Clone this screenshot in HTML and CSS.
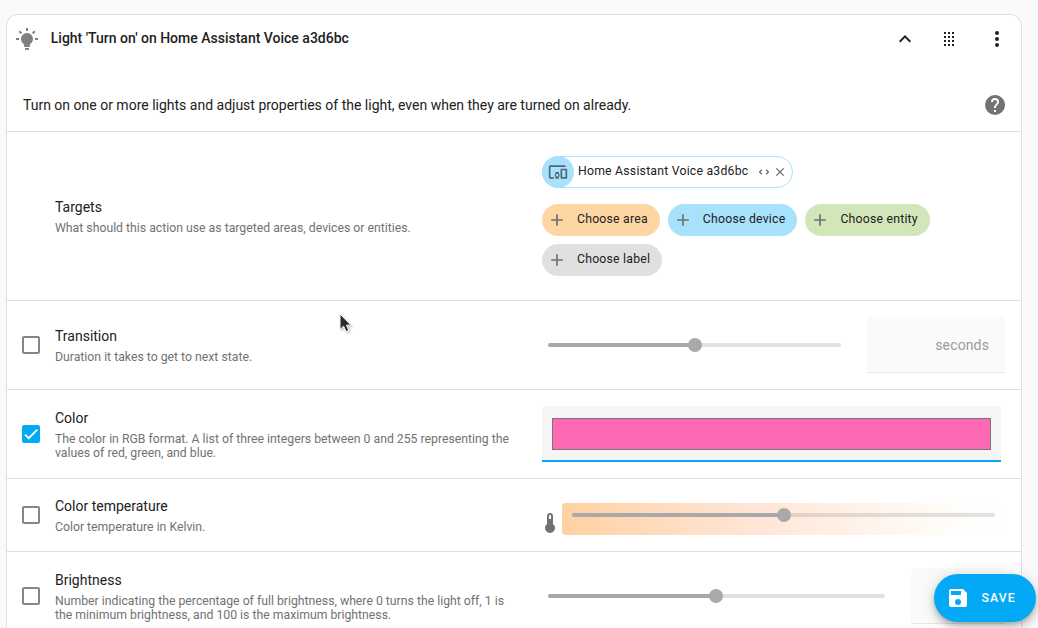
FILE: index.html
```html
<!DOCTYPE html>
<html lang="en">
<head>
<meta charset="utf-8">
<title>Light action</title>
<link rel="stylesheet" href="styles.css">
</head>
<body>
<main class="card">
  <header class="card-header">
    <svg class="icon muted" viewBox="0 0 24 24"><path d="M12,6A6,6 0 0,1 18,12C18,14.22 16.79,16.16 15,17.2V19A1,1 0 0,1 14,20H10A1,1 0 0,1 9,19V17.2C7.21,16.16 6,14.22 6,12A6,6 0 0,1 12,6M14,21V22A1,1 0 0,1 13,23H11A1,1 0 0,1 10,22V21H14M20,11H23V13H20V11M1,11H4V13H1V11M13,1V4H11V1H13M4.92,3.5L7.05,5.64L5.63,7.05L3.5,4.93L4.92,3.5M16.95,5.63L19.07,3.5L20.5,4.93L18.37,7.05L16.95,5.63Z"/></svg>
    <h1 class="title">Light 'Turn on' on Home Assistant Voice a3d6bc</h1>
    <svg class="icon chevron" viewBox="0 0 24 24"><path d="M7.41,15.41L12,10.83L16.59,15.41L18,14L12,8L6,14L7.41,15.41Z"/></svg>
    <svg class="icon handle" viewBox="0 0 24 24"><path d="M7,19V17H9V19H7M11,19V17H13V19H11M15,19V17H17V19H15M7,15V13H9V15H7M11,15V13H13V15H11M15,15V13H17V15H15M7,11V9H9V11H7M11,11V9H13V11H11M15,11V9H17V11H15M7,7V5H9V7H7M11,7V5H13V7H11M15,7V5H17V7H15Z"/></svg>
    <svg class="icon" viewBox="0 0 24 24"><path d="M12,16A2,2 0 0,1 14,18A2,2 0 0,1 12,20A2,2 0 0,1 10,18A2,2 0 0,1 12,16M12,10A2,2 0 0,1 14,12A2,2 0 0,1 12,14A2,2 0 0,1 10,12A2,2 0 0,1 12,10M12,4A2,2 0 0,1 14,6A2,2 0 0,1 12,8A2,2 0 0,1 10,6A2,2 0 0,1 12,4Z"/></svg>
  </header>
  <div class="description">
    <p class="description-text">Turn on one or more lights and adjust properties of the light, even when they are turned on already.</p>
    <svg class="icon help" viewBox="0 0 24 24"><path d="M15.07,11.25L14.17,12.17C13.45,12.89 13,13.5 13,15H11V14.5C11,13.39 11.45,12.39 12.17,11.67L13.41,10.41C13.78,10.05 14,9.55 14,9C14,7.89 13.1,7 12,7A2,2 0 0,0 10,9H8A4,4 0 0,1 12,5A4,4 0 0,1 16,9C16,9.88 15.64,10.67 15.07,11.25M13,19H11V17H13M12,2A10,10 0 0,0 2,12A10,10 0 0,0 12,22A10,10 0 0,0 22,12C22,6.47 17.5,2 12,2Z"/></svg>
  </div>

  <section class="row row-targets">
    <div class="prefix"></div>
    <div class="label">
      <div class="name">Targets</div>
      <div class="hint">What should this action use as targeted areas, devices or entities.</div>
    </div>
    <div class="control targets">
      <div class="chips">
        <div class="chip selected">
          <span class="chip-badge"><svg class="icon-20" viewBox="0 0 24 24"><path d="M3 6H21V4H3C1.9 4 1 4.9 1 6V18C1 19.1 1.9 20 3 20H7V18H3V6M13 12H9V13.78C8.39 14.33 8 15.11 8 16C8 16.89 8.39 17.67 9 18.22V20H13V18.22C13.61 17.67 14 16.88 14 16S13.61 14.33 13 13.78V12M11 17.5C10.17 17.5 9.5 16.83 9.5 16S10.17 14.5 11 14.5 12.5 15.17 12.5 16 11.83 17.5 11 17.5M22 8H16C15.5 8 15 8.5 15 9V19C15 19.5 15.5 20 16 20H22C22.5 20 23 19.5 23 19V9C23 8.5 22.5 8 22 8M21 18H17V10H21V18Z"/></svg></span>
          <span class="chip-text">Home Assistant Voice a3d6bc</span>
          <svg class="icon-14" viewBox="0 0 24 24"><path d="M18.17,12L15,8.83L16.41,7.41L21,12L16.41,16.58L15,15.17L18.17,12M5.83,12L9,15.17L7.59,16.59L3,12L7.59,7.42L9,8.83L5.83,12Z"/></svg>
          <svg class="icon-14" viewBox="0 0 24 24"><path d="M19,6.41L17.59,5L12,10.59L6.41,5L5,6.41L10.59,12L5,17.59L6.41,19L12,13.41L17.59,19L19,17.59L13.41,12L19,6.41Z"/></svg>
        </div>
      </div>
      <div class="chips">
        <div class="chip area"><svg class="icon-20" viewBox="0 0 24 24"><path d="M19,13H13V19H11V13H5V11H11V5H13V11H19V13Z"/></svg><span class="chip-text">Choose area</span></div>
        <div class="chip device"><svg class="icon-20" viewBox="0 0 24 24"><path d="M19,13H13V19H11V13H5V11H11V5H13V11H19V13Z"/></svg><span class="chip-text">Choose device</span></div>
        <div class="chip entity"><svg class="icon-20" viewBox="0 0 24 24"><path d="M19,13H13V19H11V13H5V11H11V5H13V11H19V13Z"/></svg><span class="chip-text">Choose entity</span></div>
        <div class="chip tag"><svg class="icon-20" viewBox="0 0 24 24"><path d="M19,13H13V19H11V13H5V11H11V5H13V11H19V13Z"/></svg><span class="chip-text">Choose label</span></div>
      </div>
    </div>
  </section>

  <section class="row">
    <div class="prefix"><span class="checkbox"></span></div>
    <div class="label">
      <div class="name">Transition</div>
      <div class="hint">Duration it takes to get to next state.</div>
    </div>
    <div class="control number">
      <div class="slider"><span class="fill" style="width:50.2%"></span><span class="thumb"></span></div>
      <div class="field">seconds</div>
    </div>
  </section>

  <section class="row">
    <div class="prefix"><span class="checkbox checked"><svg viewBox="0 0 24 24"><path d="M1.73,12.91 8.1,19.28 22.79,4.59"/></svg></span></div>
    <div class="label">
      <div class="name">Color</div>
      <div class="hint">The color in RGB format. A list of three integers between 0 and 255 representing the values of red, green, and blue.</div>
    </div>
    <div class="control">
      <div class="color-field"><div class="swatch"></div></div>
    </div>
  </section>

  <section class="row row-temp">
    <div class="prefix"><span class="checkbox"></span></div>
    <div class="label">
      <div class="name">Color temperature</div>
      <div class="hint">Color temperature in Kelvin.</div>
    </div>
    <div class="control temp">
      <svg class="icon thermometer" viewBox="0 0 24 24"><path d="M15 13V5A3 3 0 0 0 9 5V13A5 5 0 1 0 15 13M12 4A1 1 0 0 1 13 5V8H11V5A1 1 0 0 1 12 4Z"/></svg>
      <div class="temp-bar"><div class="slider"><span class="fill" style="width:50.1%"></span><span class="thumb"></span></div></div>
    </div>
  </section>

  <section class="row">
    <div class="prefix"><span class="checkbox"></span></div>
    <div class="label">
      <div class="name">Brightness</div>
      <div class="hint">Number indicating the percentage of full brightness, where 0 turns the light off, 1 is the minimum brightness, and 100 is the maximum brightness.</div>
    </div>
    <div class="control number">
      <div class="slider"><span class="fill" style="width:49.8%"></span><span class="thumb"></span></div>
      <div class="field narrow"></div>
    </div>
  </section>
</main>

<button class="save" type="button">
  <svg class="icon" viewBox="0 0 24 24"><path d="M15,9H5V5H15M12,19A3,3 0 0,1 9,16A3,3 0 0,1 12,13A3,3 0 0,1 15,16A3,3 0 0,1 12,19M17,3H5C3.89,3 3,3.9 3,5V19A2,2 0 0,0 5,21H19A2,2 0 0,0 21,19V7L17,3Z"/></svg>
  <span>SAVE</span>
</button>

<svg class="cursor" viewBox="0 0 14 22"><path d="M1 1V16.5L4.6 13.2L7 18.6L9.8 17.4L7.5 12.2H12Z"/></svg>
</body>
</html>
```
FILE: styles.css
```css
* { box-sizing: border-box; }
body {
  margin: 0;
  height: 628px;
  overflow: hidden;
  padding: 14px 16px 0 6px;
  background: #fafafa;
  color: #212121;
  font: 14px/20px Roboto, "Noto Sans", sans-serif;
}
svg { display: block; flex: none; fill: currentColor; }
.icon { width: 24px; height: 24px; }
.icon-20 { width: 20px; height: 20px; }
.icon-14 { width: 14px; height: 14px; }
.card {
  height: 614px;
  overflow: hidden;
  background: #fff;
  border: 1px solid #e0e0e0;
  border-bottom: 0;
  border-radius: 12px 12px 0 0;
}
.card-header {
  display: flex;
  align-items: center;
  height: 48px;
  padding: 0 12px 0 8px;
}
.muted { color: #808080; }
.title {
  flex: 1;
  margin: 0 0 2px 11.75px;
  font-size: 14px;
  font-weight: 500;
}
.chevron { margin-right: 20px; }
.handle { margin-right: 24px; }
.description {
  display: flex;
  align-items: center;
  height: 68px;
  padding: 15px 14px 0 16px;
}
.description-text { flex: 1; margin: 0; }
.help { color: #727272; }
.row {
  display: flex;
  align-items: center;
  height: 89px;
  padding-right: 16px;
  border-top: 1px solid #e0e0e0;
}
.row-targets { height: 169px; }
.row-temp { height: 73px; }
.prefix { width: 48px; padding-left: 15px; flex: none; }
.checkbox {
  display: block;
  width: 18px;
  height: 18px;
  border: 2px solid #868686;
  border-radius: 2px;
}
.checkbox.checked { background: #03a9f4; border-color: #03a9f4; }
.checkbox svg { width: 14px; height: 14px; fill: none; stroke: #fff; stroke-width: 3.1; }
.label { width: 471px; padding-right: 12px; flex: none; }
.name { line-height: 20px; }
.hint {
  margin-top: 4px;
  color: #727272;
  font-size: 12.25px;
  line-height: 14px;
}
.control { flex: 1; margin-left: 16px; min-width: 0; }
.targets { display: flex; flex-direction: column; gap: 16px; }
.chips { display: flex; flex-wrap: wrap; gap: 8px; }
.chip {
  display: flex;
  align-items: center;
  height: 32px;
  padding: 0 12px 0 5px;
  border-radius: 16px;
}
.chip .icon-20 { color: #6f6f6f; }
.chip > .icon-20 { margin-right: 10px; }
.chip-text { margin-bottom: 2px; font-size: 12.25px; letter-spacing: 0.0178571em; white-space: nowrap; }
.area { background: #fed6a4; }
.device { background: #a8e1fb; }
.entity { background: #d2e7b9; }
.tag { background: #e0e0e0; }
.selected { padding: 0 3px 0 0; border: 1px solid #a8e1fb; }
.selected .icon-14 { margin-right: 2px; color: #616161; }
.selected .chip-text { margin-right: 9px; }
.chip-badge {
  display: flex;
  align-items: center;
  justify-content: center;
  width: 32px;
  height: 32px;
  margin: -1px 4px -1px -1px;
  border-radius: 50%;
  background: #a8e1fb;
}
.chip-badge .icon-20 { color: #4f6a76; }
.number { display: flex; align-items: center; padding-left: 6px; gap: 26px; }
.slider {
  display: flex;
  align-items: center;
  flex: 1;
  height: 4px;
  border-radius: 2px;
  background: rgba(130, 130, 130, 0.23);
}
.fill { height: 4px; border-radius: 2px; background: #a9a9a9; }
.thumb { flex: none; width: 14px; height: 14px; margin-left: -7px; border-radius: 50%; background: #a9a9a9; }
.field {
  width: 138px;
  height: 56px;
  padding: 0 16px;
  border-bottom: 1px solid #e6e6e6;
  border-radius: 4px 4px 0 0;
  background: #fafafa;
  color: #9b9b9b;
  font-size: 14px;
  letter-spacing: 0.13px;
  line-height: 56px;
  text-align: right;
}
.narrow { width: 94px; }
.color-field {
  height: 56px;
  margin-right: 4px;
  padding: 12px 10px 10px;
  border-bottom: 2px solid #03a9f4;
  border-radius: 4px 4px 0 0;
  background: #f5f5f5;
}
.swatch { height: 32px; border: 1px solid #767676; background: #ff69b4; }
.temp { display: flex; align-items: center; padding-top: 7px; }
.thermometer { margin: 8px 0 0 -4px; color: #727272; }
.temp-bar {
  flex: 1;
  height: 32px;
  padding: 10px 10px 0;
  border-radius: 4px;
  background: linear-gradient(90deg, #ffd1a3 0%, #ffe4d3 40%, #fff1e7 65%, #fffdfa 88%, #fff 100%);
}
.save {
  position: absolute;
  left: 934px;
  top: 574px;
  display: flex;
  align-items: center;
  gap: 11.5px;
  width: 102px;
  height: 48px;
  padding: 0 0 0 12px;
  border: 0;
  border-radius: 24px;
  background: #03a9f4;
  color: #fff;
  font: 500 12.25px/20px Roboto, sans-serif;
  letter-spacing: 0.0892857em;
  box-shadow: 0 3px 5px -1px rgba(0, 0, 0, 0.2), 0 6px 10px rgba(0, 0, 0, 0.14), 0 1px 18px rgba(0, 0, 0, 0.12);
}
.cursor {
  position: absolute;
  left: 338.6px;
  top: 313px;
  width: 14px;
  height: 22px;
  fill: #2b2b2b;
  stroke: #fff;
  stroke-width: 1;
  filter: drop-shadow(1px 1px 1px rgba(0, 0, 0, 0.3));
}
```
